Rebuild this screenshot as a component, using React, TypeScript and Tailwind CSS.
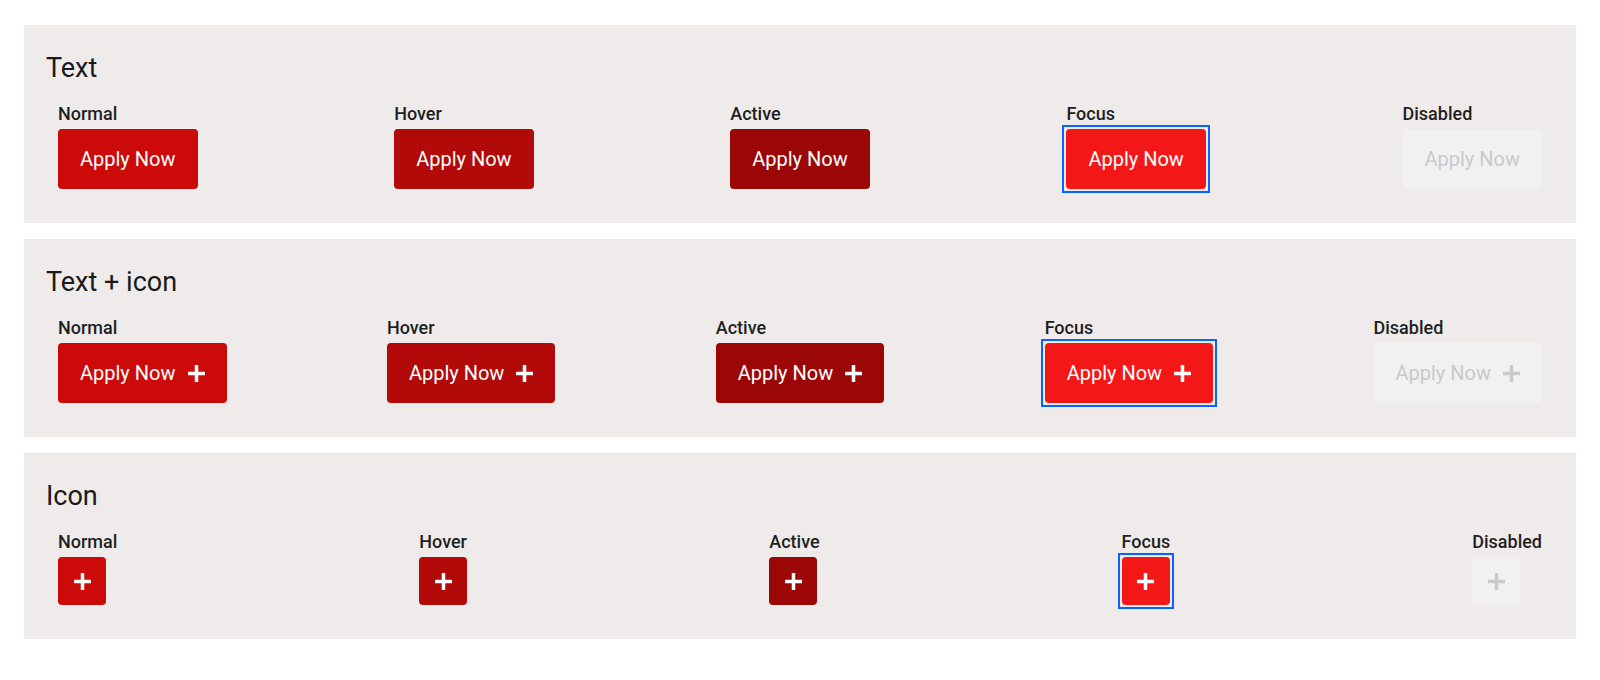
import React from "react";

type Variant = "normal" | "hover" | "active" | "focus" | "disabled";

const states: { key: Variant; label: string }[] = [
  { key: "normal", label: "Normal" },
  { key: "hover", label: "Hover" },
  { key: "active", label: "Active" },
  { key: "focus", label: "Focus" },
  { key: "disabled", label: "Disabled" },
];

const variantClass: Record<Variant, string> = {
  normal: "bg-[#cc0a0a] text-white",
  hover: "bg-[#b20909] text-white",
  active: "bg-[#9b0707] text-white",
  focus: "bg-[#f41718] text-white",
  disabled: "bg-[#f2f1f1] text-[#c9c9c9]",
};

function Plus({ className = "" }: { className?: string }) {
  return (
    <svg width="17" height="17" viewBox="0 0 17 17" className={className} aria-hidden="true">
      <rect x="6.75" y="0" width="3.5" height="17" rx="0.5" fill="currentColor" />
      <rect x="0" y="6.75" width="17" height="3.5" rx="0.5" fill="currentColor" />
    </svg>
  );
}

function FocusRing({ show }: { show: boolean }) {
  if (!show) return null;
  return (
    <span className="pointer-events-none absolute -inset-[4px] border-2 border-[#0a63ff]" />
  );
}

function Section({
  title,
  kind,
}: {
  title: string;
  kind: "text" | "textIcon" | "icon";
}) {
  return (
    <section className="bg-[#efebeb] pt-[27px] pb-[34px] px-[22px]">
      <h2 className="text-[27px] leading-[32px] font-normal text-[#1a1a1a]">{title}</h2>
      <div className="mt-[18px] px-[12px] flex justify-between">
        {states.map((s) => (
          <div key={s.key} className="flex flex-col items-start">
            <span className="text-[18px] leading-[24px] font-medium text-[#1f1f1f]">{s.label}</span>
            {kind === "icon" ? (
              <div
                className={`relative mt-[3px] w-[48px] h-[48px] rounded flex items-center justify-center ${variantClass[s.key]}`}
              >
                <Plus />
                <FocusRing show={s.key === "focus"} />
              </div>
            ) : (
              <div
                className={`relative mt-[3px] h-[60px] px-[22px] rounded flex items-center gap-[12px] text-[20px] ${variantClass[s.key]}`}
              >
                <span>Apply Now</span>
                {kind === "textIcon" && <Plus />}
                <FocusRing show={s.key === "focus"} />
              </div>
            )}
          </div>
        ))}
      </div>
    </section>
  );
}

export default function App() {
  return (
    <div
      className="w-[1600px] h-[680px] bg-white px-6 pt-[25px] flex flex-col gap-4"
      style={{ fontFamily: "Roboto, 'Open Sans', sans-serif" }}
    >
      <Section title="Text" kind="text" />
      <Section title="Text + icon" kind="textIcon" />
      <Section title="Icon" kind="icon" />
    </div>
  );
}
